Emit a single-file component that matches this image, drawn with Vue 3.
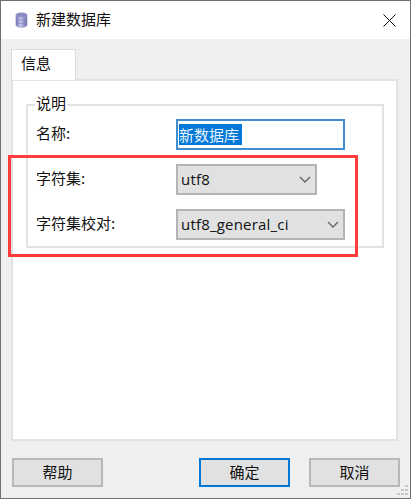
<template>
  <div class="window">
    <div class="titlebar">
      <svg class="db-icon" width="13" height="16" viewBox="0 0 14 17">
        <defs>
          <linearGradient id="dbFill" x1="0" x2="1" y1="0" y2="0">
            <stop offset="0" stop-color="#6a6ab0" />
            <stop offset="0.4" stop-color="#c8c8ee" />
            <stop offset="1" stop-color="#6c6ca8" />
          </linearGradient>
        </defs>
        <path d="M1 3v11c0 1.5 2.7 2.5 6 2.5s6-1 6-2.5V3z" fill="url(#dbFill)" stroke="#a4a4d0" stroke-width="0.6" />
        <ellipse cx="7" cy="3" rx="6" ry="2.4" fill="#8a8ac0" stroke="#a4a4d0" stroke-width="0.6" />
        <path d="M1 7.5c1 1.4 11 1.4 12 0M1 11c1 1.4 11 1.4 12 0" fill="none" stroke="#7f7fb8" stroke-width="0.7" />
      </svg>
      <span class="title">新建数据库</span>
      <svg class="close" width="13" height="13" viewBox="0 0 13 13">
        <path d="M0.5 0.5l12 12M12.5 0.5l-12 12" stroke="#111" stroke-width="1" fill="none" />
      </svg>
    </div>

    <div class="body">
      <div class="tabs"><div class="tab">信息</div></div>
      <div class="panel">
        <div class="group">
          <span class="legend">说明</span>
          <div class="row">
            <label>名称:</label>
            <div class="input"><span class="selected">新数据库</span></div>
          </div>
          <div class="row">
            <label>字符集:</label>
            <div class="combo short"><span>utf8</span><svg width="12" height="7" viewBox="0 0 12 7"><path d="M1 1l5 5 5-5" fill="none" stroke="#666" stroke-width="1.4" /></svg></div>
          </div>
          <div class="row">
            <label>字符集校对:</label>
            <div class="combo"><span>utf8_general_ci</span><svg width="12" height="7" viewBox="0 0 12 7"><path d="M1 1l5 5 5-5" fill="none" stroke="#666" stroke-width="1.4" /></svg></div>
          </div>
        </div>
      </div>
      <div class="buttons">
        <button class="btn">帮助</button>
        <div class="right">
          <button class="btn primary">确定</button>
          <button class="btn">取消</button>
        </div>
      </div>
    </div>

    <div class="highlight"></div>
    <svg class="grip" width="12" height="12" viewBox="0 0 12 12">
      <g fill="#c8c8c8">
        <rect x="8" y="0" width="3" height="2" />
        <rect x="4" y="4" width="3" height="2" />
        <rect x="8" y="4" width="3" height="2" />
        <rect x="0" y="8" width="3" height="2" />
        <rect x="4" y="8" width="3" height="2" />
        <rect x="8" y="8" width="3" height="2" />
      </g>
    </svg>
  </div>
</template>

<script setup>
</script>

<style scoped>
.window {
  position: relative;
  box-sizing: border-box;
  width: 411px;
  height: 499px;
  border: 1px solid #6f6f6f;
  background: #efefef;
  display: flex;
  flex-direction: column;
  font-family: "Noto Sans CJK SC", "Noto Sans", sans-serif;
  font-size: 15px;
  color: #111;
}
.titlebar {
  height: 38px;
  background: #fff;
  display: flex;
  align-items: center;
  padding: 0 14px 0 14px;
  flex: none;
}
.db-icon {
  flex: none;
}
.title {
  margin-left: 8px;
  flex: 1;
  line-height: 20px;
  padding-bottom: 2px;
}
.body {
  flex: 1;
  display: flex;
  flex-direction: column;
  padding: 10px 12px 10px 10px;
  min-height: 0;
}
.tabs {
  display: flex;
  height: 31px;
  flex: none;
  margin-bottom: -1px;
  position: relative;
}
.tab {
  width: 65px;
  box-sizing: border-box;
  background: #fff;
  border: 1px solid #dcdcdc;
  border-bottom: none;
  padding: 1px 0 0 9px;
  line-height: 24px;
}
.panel {
  height: 362px;
  box-sizing: border-box;
  background: #fff;
  border: 2px solid #e2e2e2;
  padding: 23px 12px 0 13px;
  flex: none;
}
.group {
  position: relative;
  box-sizing: border-box;
  height: 144px;
  border: 2px solid #e2e2e2;
  padding: 13px 0 0 8px;
  display: flex;
  flex-direction: column;
  gap: 14px;
}
.legend {
  position: absolute;
  top: -13px;
  left: 7px;
  padding: 0 1px;
  background: #fff;
  line-height: 20px;
}
.row {
  display: flex;
  align-items: center;
  height: 31px;
}
label {
  width: 140px;
  flex: none;
  padding-bottom: 4px;
}
.input {
  box-sizing: border-box;
  width: 169px;
  height: 31px;
  border: 2px solid #3e8ed0;
  background: #fff;
  padding: 0 0 0 1px;
  display: flex;
  align-items: center;
}
.selected {
  background: #0078d7;
  color: #e8f2fb;
  line-height: 21px;
  height: 21px;
  width: 63px;
  white-space: nowrap;
  overflow: hidden;
}
.combo {
  box-sizing: border-box;
  width: 169px;
  height: 31px;
  border: 2px solid #b4b4b4;
  background: #e1e1e1;
  display: flex;
  align-items: center;
  justify-content: space-between;
  padding: 0 4px 0 3px;
  font-family: "Open Sans", "Noto Sans", sans-serif;
}
.combo span {
  padding-bottom: 1px;
  letter-spacing: 0.2px;
}
.combo.short {
  width: 141px;
}
.buttons {
  display: flex;
  justify-content: space-between;
  margin-top: 17px;
  padding-left: 1px;
  margin-right: -2px;
}
.right {
  display: flex;
  gap: 19px;
}
.btn {
  box-sizing: border-box;
  width: 91px;
  height: 29px;
  border: 2px solid #b8b8b8;
  background: #e1e1e1;
  font-family: inherit;
  font-size: 15px;
  color: #111;
  padding: 0 0 3px;
}
.btn.primary {
  border-color: #0078d7;
}
.highlight {
  position: absolute;
  left: 7px;
  top: 154px;
  width: 350px;
  height: 102px;
  box-sizing: border-box;
  border: 3px solid #ff3b3b;
  pointer-events: none;
}
.grip {
  position: absolute;
  right: 1px;
  bottom: 1px;
}
</style>

<style>
body {
  margin: 0;
  background: #fff;
}
</style>
